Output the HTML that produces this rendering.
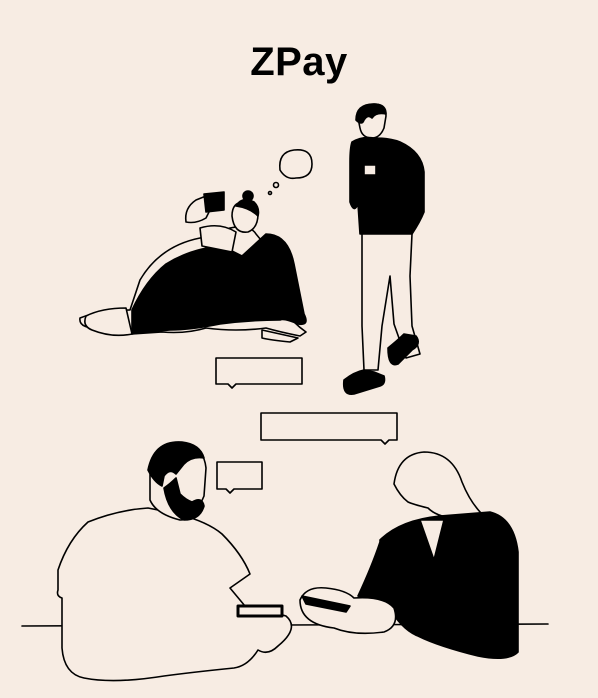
<!DOCTYPE html>
<html><head><style>
html,body{margin:0;padding:0;background:#f7ece3;}
body{width:598px;height:698px;position:relative;overflow:hidden;font-family:"Liberation Sans",sans-serif;}
h1{position:absolute;top:40px;left:0;width:598px;text-align:center;margin:0;font-size:40px;font-weight:bold;letter-spacing:0.5px;color:#000;}
svg{position:absolute;left:0;top:0;}
</style></head><body>
<h1>ZPay</h1>
<svg width="598" height="698" viewBox="0 0 598 698" fill="none" stroke="#000" stroke-width="1.6" stroke-linecap="round" stroke-linejoin="round">
<!-- thought bubble -->
<path d="M280 170 q-2 -18 14 -20 q18 -2 18 14 q0 14 -16 14 q-10 2 -16 -8z"/>
<circle cx="276" cy="185" r="2.5"/><circle cx="270" cy="193" r="1.5"/>
<!-- standing man -->
<path d="M358 118 q2 -14 16 -14 q12 0 12 12 l-2 12 q-4 10 -12 10 q-10 0 -12 -10z" fill="#f7ece3"/>
<path d="M356 120 q0 -16 18 -16 q12 0 12 10 q-10 -2 -14 4 q-4 -4 -8 2 q-2 6 -8 0z" fill="#000"/>
<path d="M352 142 q10 -6 22 -4 q16 0 26 4 q22 10 24 30 l0 40 q-4 10 -12 22 l-52 0 l-2 -30 q-4 10 -8 -2 l0 -40 q0 -14 2 -20z" fill="#000"/>
<rect x="364" y="165" width="12" height="10" fill="#f7ece3"/>
<path d="M362 234 l50 0 l-2 42 l2 50 l8 28 l-14 4 l-12 -34 l-4 -48 l-8 50 l-4 44 l-14 0 l-2 -44 z" fill="#f7ece3"/>
<path d="M344 380 q10 -8 20 -10 l10 2 l10 4 q2 8 -4 10 l-26 8 q-12 2 -10 -14z" fill="#000"/>
<path d="M388 348 q10 -8 16 -14 l12 2 q6 8 -4 14 l-14 14 q-10 4 -10 -16z" fill="#000"/>
<!-- sitting woman -->
<path d="M80 318 q20 -8 50 -8 l10 -30 q20 -34 60 -42 l30 -10 q20 -4 26 6 q18 20 20 50 q4 30 30 48 l-6 4 q-20 -4 -34 -8 q-30 4 -60 0 q-20 6 -44 4 l-30 2 q-20 -2 -26 -6 q-28 2 -26 -10z" fill="#f7ece3"/>
<path d="M132 310 q14 -30 34 -46 q26 -16 56 -18 l20 10 l24 -22 q22 0 28 30 q6 30 10 50 q6 12 -6 10 q-14 -6 -18 -4 q-30 0 -60 4 q-30 6 -50 6 q-24 2 -38 4 z" fill="#000"/>
<path d="M86 316 q16 -8 40 -8 l6 26 q-20 4 -40 -4 q-10 -4 -6 -14z" fill="#f7ece3"/>
<path d="M232 216 q0 -14 12 -14 q12 0 14 12 q0 14 -10 18 q-14 2 -16 -16z" fill="#f7ece3"/>
<path d="M236 206 q6 -10 18 -4 q6 6 4 14 q-8 -8 -22 -10z" fill="#000"/><circle cx="248" cy="196" r="5" fill="#000"/>
<path d="M200 228 q20 -6 36 4 l-4 20 l-30 -6 z" fill="#f7ece3"/>
<path d="M186 222 q-2 -14 10 -22 l10 -4 l6 10 l-6 12 q-10 6 -20 4z" fill="#f7ece3"/>
<path d="M204 194 l20 -2 l0 18 l-18 2 z" fill="#000"/>
<path d="M262 330 q18 4 36 8 l-8 4 q-20 -2 -28 -4z" fill="#f7ece3"/>
<!-- speech boxes -->
<path d="M216 358 l86 0 l0 26 l-66 0 l-4 4 l-4 -4 l-12 0 z"/>
<path d="M261 413 l136 0 l0 27 l-8 0 l-4 4 l-4 -4 l-120 0 z"/>
<path d="M217 462 l45 0 l0 27 l-28 0 l-4 4 l-4 -4 l-9 0 z"/>
<!-- table -->
<path d="M22 626 l526 -2"/>
<!-- man bottom -->
<path d="M58 570 q10 -30 30 -48 q30 -12 60 -14 l30 6 q30 8 44 20 q20 20 28 40 l-20 14 l20 24 q10 -4 36 4 q14 12 -8 30 q-10 10 -20 4 q-10 16 -24 18 q-40 4 -70 8 q-50 8 -80 2 q-20 -4 -22 -30 l0 -50 q-6 -2 -4 -8z" fill="#f7ece3"/>
<path d="M150 466 q10 -26 36 -22 q18 4 20 24 l-2 28 q-10 24 -24 24 q-24 -6 -30 -20 z" fill="#f7ece3"/>
<path d="M148 470 q6 -30 34 -28 q18 2 22 16 q-12 -2 -20 6 l-8 10 q-6 -6 -12 2 l-2 10 q-8 -4 -14 -16z" fill="#000"/>
<path d="M164 488 q4 24 20 32 q16 0 20 -14 q-2 -10 -12 -4 q-6 -2 -12 -8 l-4 -16 q-6 6 -12 10z" fill="#000"/>
<rect x="238" y="606" width="44" height="10" fill="#f7ece3" stroke-width="3"/>
<!-- woman bottom -->
<path d="M394 484 q4 -30 30 -32 q28 0 38 30 q8 20 20 32 l-30 4 q-16 -2 -24 -10 q-16 -4 -20 -6 q-8 -6 -14 -18z" fill="#f7ece3"/>
<path d="M380 540 q20 -20 60 -24 l50 -4 q24 6 28 40 l0 100 q-10 10 -40 4 q-40 -10 -60 -20 q-16 -6 -30 -30 l-30 -10 q14 -30 22 -54z" fill="#000"/>
<path d="M420 520 l14 40 l10 -40z" fill="#f7ece3"/>
<path d="M300 600 q6 -14 26 -12 q20 2 28 10 q30 -2 40 10 q6 18 -10 24 q-30 4 -50 -4 q-34 -4 -34 -28z" fill="#f7ece3"/>
<path d="M302 596 l48 10 l-4 6 l-40 -8z" fill="#000"/>
</svg>
</body></html>
